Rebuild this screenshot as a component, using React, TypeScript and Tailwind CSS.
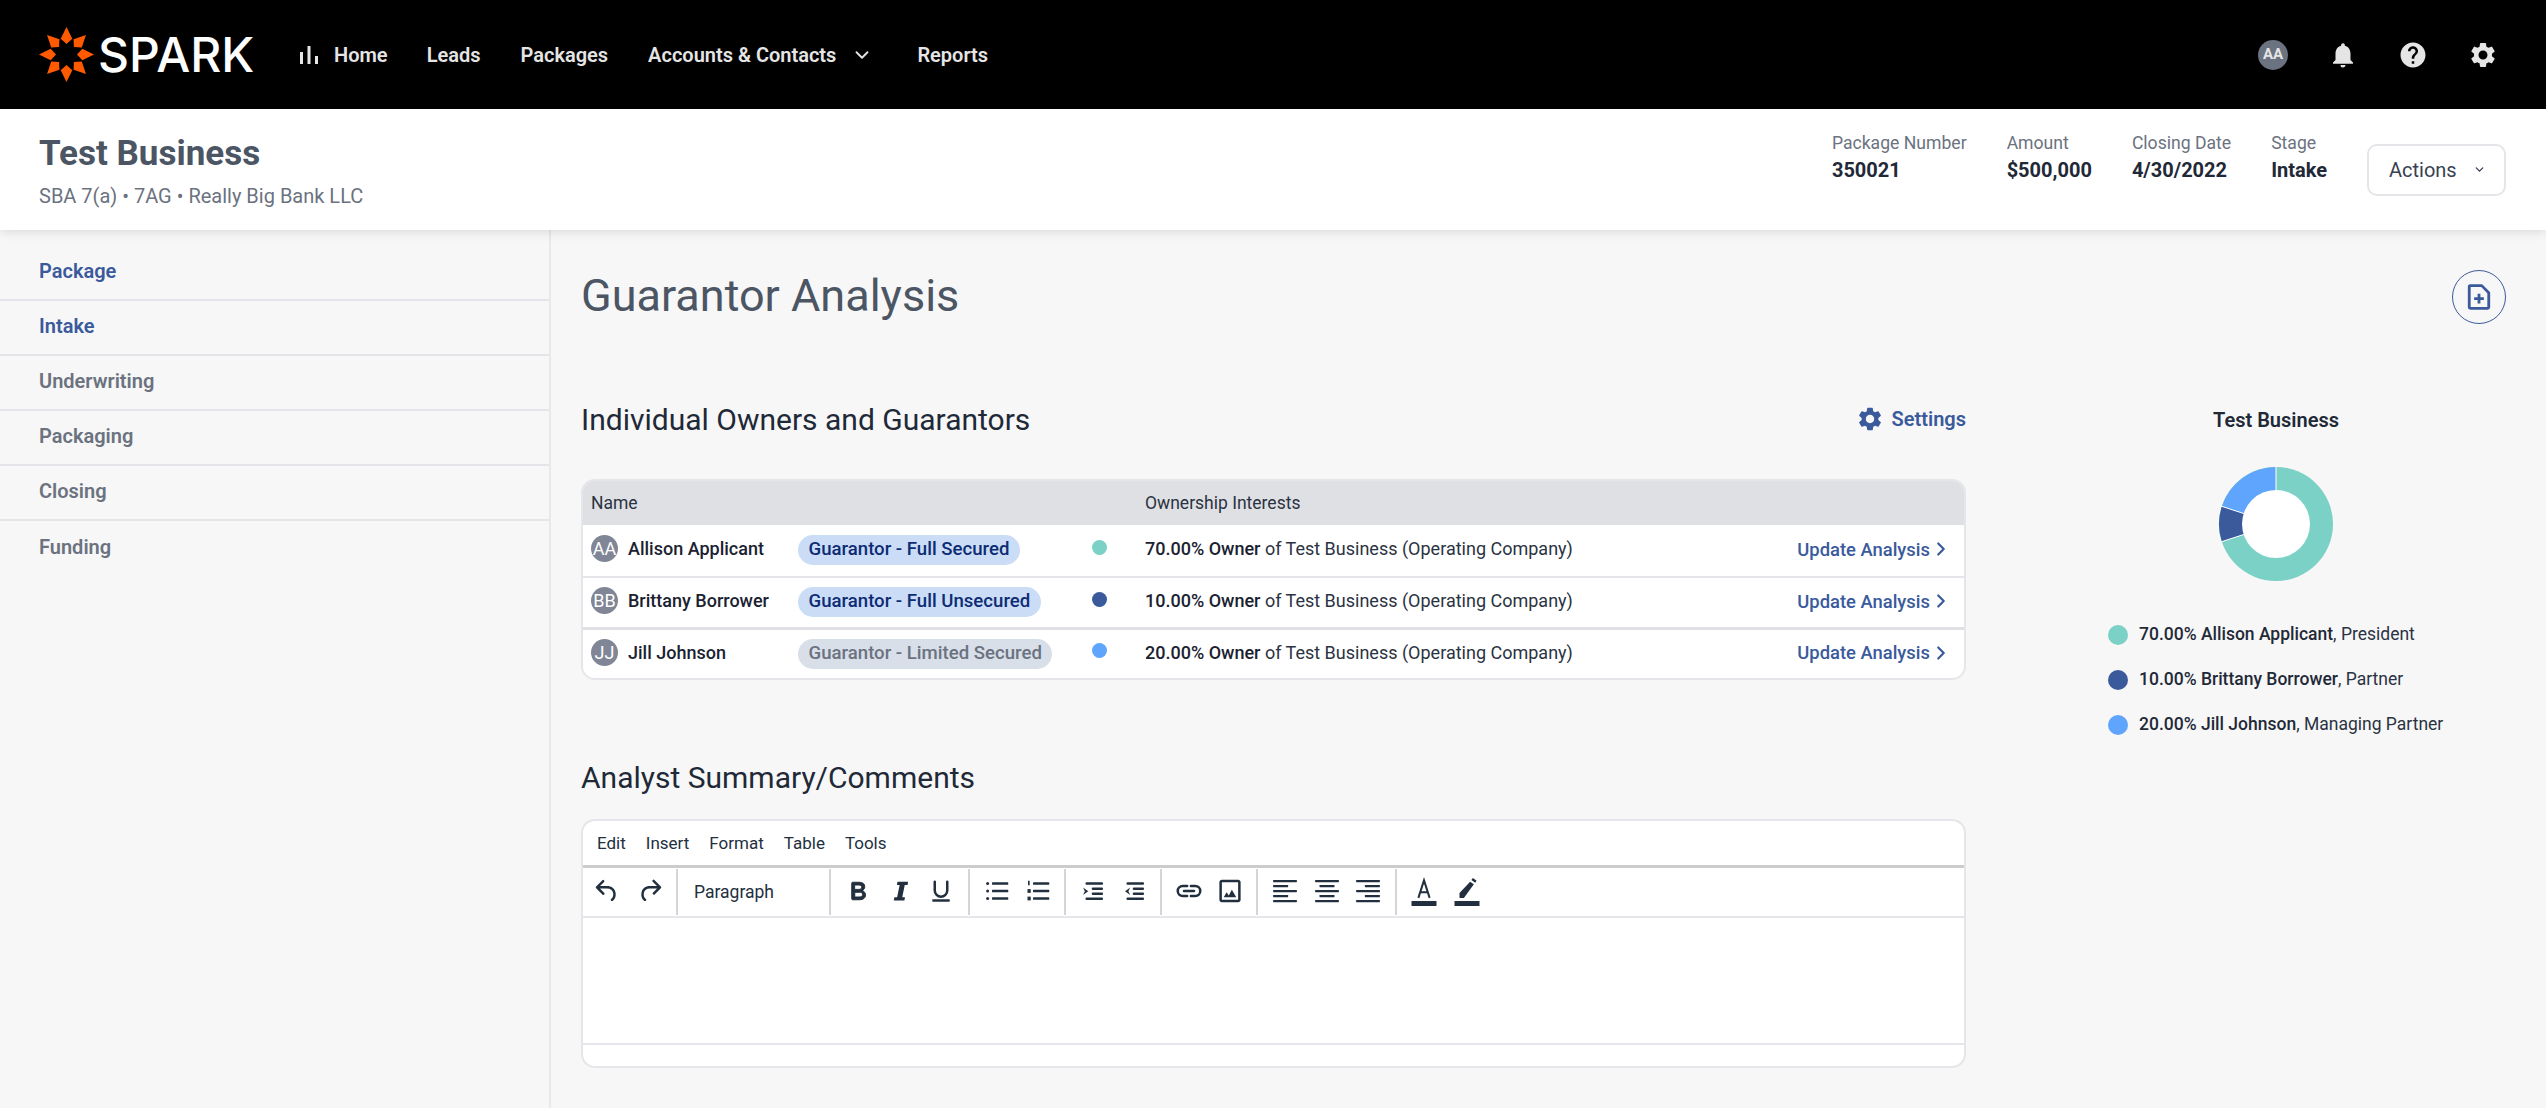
import { ChevronDown, ChevronRight } from 'lucide-react';
import { MdHelp, MdNotifications, MdSettings } from 'react-icons/md';

const owners = [
  { initials: 'AA', name: 'Allison Applicant', badge: 'Guarantor - Full Secured', limited: false, dot: 'bg-[#7bd1c6]', pct: '70.00%', role: 'President', row: 'h-[53px] border-b-2 border-[#e5e6e9]' },
  { initials: 'BB', name: 'Brittany Borrower', badge: 'Guarantor - Full Unsecured', limited: false, dot: 'bg-[#3a5a9c]', pct: '10.00%', role: 'Partner', row: 'h-[52px] border-b-[3px] border-[#dfe0e4]' },
  { initials: 'JJ', name: 'Jill Johnson', badge: 'Guarantor - Limited Secured', limited: true, dot: 'bg-[#60a5fd]', pct: '20.00%', role: 'Managing Partner', row: 'h-[48px]' },
];

const sideItems = [
  { label: 'Package', active: true },
  { label: 'Intake', active: true },
  { label: 'Underwriting', active: false },
  { label: 'Packaging', active: false },
  { label: 'Closing', active: false },
  { label: 'Funding', active: false },
];

const packageFacts = [
  { label: 'Package Number', value: '350021' },
  { label: 'Amount', value: '$500,000' },
  { label: 'Closing Date', value: '4/30/2022' },
  { label: 'Stage', value: 'Intake' },
];

function SparkStar() {
  const angles = [0, 45, 90, 135, 180, 225, 270, 315];
  return (
    <svg width="55" height="55" viewBox="0 0 55 55" className="shrink-0">
      {angles.map((a) => (
        <polygon key={a} points="27.5,0 21.7,11.7 27.5,17 33.3,11.7" fill="#ff5a00" transform={`rotate(${a} 27.5 27.5)`} />
      ))}
    </svg>
  );
}

function BarsIcon() {
  return (
    <svg width="18" height="18" viewBox="0 0 18 18" fill="#e5e5e5">
      <rect x="0" y="6" width="3" height="12" />
      <rect x="7.5" y="0" width="3" height="18" />
      <rect x="15" y="10" width="3" height="8" />
    </svg>
  );
}

function Tool({ children }: { children: React.ReactNode }) {
  return (
    <div className="w-[42.5px] flex items-center justify-center mb-[2px]">
      <svg width="30" height="30" viewBox="0 0 24 24" fill="#222f3e">
        {children}
      </svg>
    </div>
  );
}

function Lines({ rows }: { rows: [number, number][] }) {
  return (
    <>
      {rows.map(([x, w], i) => (
        <rect key={i} x={x} y={3.2 + i * 4} width={w} height="1.7" rx="0.3" />
      ))}
    </>
  );
}

function Donut() {
  return (
    <svg width="116" height="116" viewBox="0 0 116 116">
      <circle cx="58" cy="58" r="57" fill="#7bd1c6" />
      <path d="M58 58 L58 1 A57 57 0 0 0 3.8 40.4 Z" fill="#60a5fd" />
      <path d="M58 58 L3.8 40.4 A57 57 0 0 0 3.8 75.6 Z" fill="#3a5a9c" />
      <g stroke="#ffffff" strokeWidth="1">
        <line x1="58" y1="58" x2="58" y2="0" />
        <line x1="58" y1="58" x2="3" y2="40.1" />
        <line x1="58" y1="58" x2="3" y2="75.9" />
      </g>
      <circle cx="58" cy="58" r="34" fill="#ffffff" />
    </svg>
  );
}

function OwnerRow({ owner }: { owner: (typeof owners)[number] }) {
  return (
    <div className={`flex items-center bg-white ${owner.row}`}>
      <div className="w-[215px] shrink-0 flex items-center pl-[8px] gap-[10px] mb-[4px]">
        <div className="w-[27px] h-[27px] rounded-full bg-[#808695] text-white text-[18px] flex items-center justify-center">{owner.initials}</div>
        <span className="text-[18px] font-medium text-[#1a2231]">{owner.name}</span>
      </div>
      <div className="w-[294px] shrink-0 mb-[1px]">
        <span className={`inline-flex items-center h-[30px] px-[10.5px] rounded-full text-[18.6px] font-medium ${owner.limited ? 'bg-[#d8dfe9] text-[#6b7280]' : 'bg-[#cbdcf7] text-[#0d2c74]'}`}>
          {owner.badge}
        </span>
      </div>
      <div className="w-[53px] shrink-0">
        <div className={`w-[15px] h-[15px] rounded-full mb-[7px] ${owner.dot}`} />
      </div>
      <div className="flex-1 text-[18px] text-[#2a3342] mb-[4px]">
        <span className="font-medium text-[#1a2231]">{owner.pct} Owner</span> of Test Business (Operating Company)
      </div>
      <div className="flex items-center pr-[12px] mb-[2px] text-[18.4px] font-medium text-[#3a5a9c]">
        Update Analysis
        <ChevronRight size={22} strokeWidth={2.4} />
      </div>
    </div>
  );
}

export default function App() {
  return (
    <div className="h-[1108px] flex flex-col bg-[#f7f7f7] overflow-hidden font-[family-name:Roboto,sans-serif]">
      {/* Top nav */}
      <header className="h-[109px] shrink-0 bg-black flex items-center pl-[39px] pr-[48px]">
        <div className="w-[214px] shrink-0 flex items-center">
          <SparkStar />
          <span className="ml-[4px] text-[48px] leading-none font-medium text-white font-[family-name:Inter,sans-serif]">SPARK</span>
        </div>
        <nav className="ml-[47px] flex items-center text-[20px] font-semibold text-[#e5e5e5]">
          <BarsIcon />
          <span className="ml-[16px]">Home</span>
          <span className="ml-[39px]">Leads</span>
          <span className="ml-[40px]">Packages</span>
          <span className="ml-[40px]">Accounts &amp; Contacts</span>
          <ChevronDown size={22} strokeWidth={2} className="ml-[15px]" />
          <span className="ml-[44px]">Reports</span>
        </nav>
        <div className="ml-auto flex items-center gap-[40px] text-[#e5e5e5]">
          <div className="w-[30px] h-[30px] rounded-full bg-[#6b7280] text-[15px] font-bold flex items-center justify-center">AA</div>
          <MdNotifications size={30} />
          <MdHelp size={30} />
          <MdSettings size={30} />
        </div>
      </header>

      {/* Package header */}
      <div className="relative z-10 h-[121px] shrink-0 bg-white shadow-[0_2px_10px_rgba(0,0,0,0.12)] flex items-center justify-between pl-[39px] pr-[40px]">
        <div className="mt-[2px]">
          <div className="text-[35px] leading-[44px] font-bold text-[#4b5563]">Test Business</div>
          <div className="mt-[7px] text-[20px] leading-[26px] text-[#6b7280]">SBA 7(a) • 7AG • Really Big Bank LLC</div>
        </div>
        <div className="flex items-center">
          <div className="flex gap-[40px] mb-[26px]">
            {packageFacts.map((f) => (
              <div key={f.label}>
                <div className="text-[17.6px] leading-[26px] text-[#6b7280]">{f.label}</div>
                <div className="text-[20px] leading-[28px] font-bold text-[#1f2937]">{f.value}</div>
              </div>
            ))}
          </div>
          <button className="ml-[40px] w-[139px] h-[52px] bg-white border-2 border-[#e5e6e9] rounded-[10px] flex items-center pl-[20px] text-[20px] text-[#374151]">
            Actions
            <ChevronDown size={13} strokeWidth={2.5} className="ml-[16px]" />
          </button>
        </div>
      </div>

      <div className="flex-1 flex min-h-0">
        {/* Sidebar */}
        <aside className="w-[551px] shrink-0 border-r-2 border-[#e8e9ec] pt-[16px]">
          {sideItems.map((item, i) => (
            <div
              key={item.label}
              className={`h-[55px] pb-[4px] flex items-center pl-[39px] text-[20px] font-semibold ${i < 5 ? 'border-b-2 border-[#e4e5e9]' : ''} ${item.active ? 'text-[#3a5a9c]' : 'text-[#6b7280]'}`}
            >
              {item.label}
            </div>
          ))}
        </aside>

        {/* Main */}
        <main className="flex-1 min-w-0 pl-[30px] pr-[40px] pt-[40px]">
          <div className="flex items-center justify-between h-[54px]">
            <h1 className="text-[45px] leading-[54px] text-[#4b5563] -mt-[3px]">Guarantor Analysis</h1>
            <div className="w-[54px] h-[54px] rounded-full border-[1.5px] border-[#3a5a9c] flex items-center justify-center">
              <svg width="26" height="26" viewBox="0 0 24 24" fill="none" stroke="#3a5a9c" strokeWidth="2.6" strokeLinejoin="round">
                <path d="M4 1.500h10.500L21 8v13.500a1 1 0 01-1 1H4a1 1 0 01-1-1V2.500a1 1 0 011-1z" />
                <path d="M12 9v9M7.500 13.500h9" />
              </svg>
            </div>
          </div>

          <div className="flex mt-[75px]">
            <div className="w-[1385px] shrink-0">
              <div className="flex items-center justify-between h-[40px]">
                <h2 className="text-[30px] text-[#1f2937]">Individual Owners and Guarantors</h2>
                <div className="flex items-center gap-[8px] text-[20px] font-semibold text-[#3a5a9c]">
                  <MdSettings size={28} />
                  Settings
                </div>
              </div>

              <div className="mt-[40px] rounded-[14px] border-2 border-[#e5e6e9] overflow-hidden">
                <div className="h-[44px] bg-[#dfe0e4] flex items-center text-[17.5px] text-[#2a3342]">
                  <div className="w-[562px] pl-[8px]">Name</div>
                  <div>Ownership Interests</div>
                </div>
                {owners.map((o) => (
                  <OwnerRow key={o.initials} owner={o} />
                ))}
              </div>

              <h2 className="mt-[77px] h-[40px] flex items-center text-[30px] text-[#1f2937]">Analyst Summary/Comments</h2>

              <div className="mt-[22px] h-[249px] rounded-[14px] border-2 border-[#e5e6e9] bg-white flex flex-col overflow-hidden">
                <div className="h-[47px] shrink-0 flex items-center pl-[14px] pt-[2px] gap-[20px] text-[17px] text-[#222f3e] border-b-[3px] border-[#cccccc]">
                  <span>Edit</span>
                  <span>Insert</span>
                  <span>Format</span>
                  <span>Table</span>
                  <span>Tools</span>
                </div>
                <div className="h-[50px] shrink-0 flex items-center border-b-2 border-[#e5e6e9]">
                  <div className="h-[46px] w-[95px] flex pl-[3px] border-r-2 border-[#d4d5d8]">
                    <Tool>
                      <path d="M6.4 8H12c3.7 0 6.2 2 6.8 5.1.6 2.7-.4 5.6-2.3 6.8a1 1 0 01-1-1.8c1.1-.7 1.8-2.7 1.4-4.6-.5-2.1-2.1-3.5-4.9-3.5H6.4l3.3 3.3a1 1 0 11-1.4 1.4l-5-5a1 1 0 010-1.4l5-5a1 1 0 011.4 1.4L6.4 8z" />
                    </Tool>
                    <Tool>
                      <path d="M17.6 10H12c-2.8 0-4.4 1.4-4.9 3.5-.4 2 .3 3.9 1.4 4.6a1 1 0 11-1 1.8c-2-1.2-2.9-4.1-2.3-6.8.6-3 3-5.1 6.8-5.1h5.6l-3.3-3.3a1 1 0 111.4-1.4l5 5a1 1 0 010 1.4l-5 5a1 1 0 01-1.4-1.4l3.3-3.3z" />
                    </Tool>
                  </div>
                  <div className="h-[46px] w-[153px] flex items-center pl-[16px] text-[17.5px] text-[#222f3e] border-r-2 border-[#d4d5d8]">Paragraph</div>
                  <div className="h-[46px] w-[139px] flex px-[6px] border-r-2 border-[#d4d5d8]">
                    <Tool>
                      <path stroke="#222f3e" strokeWidth="0.8" d="M7.8 19c-.3 0-.5 0-.6-.2l-.2-.5V5.700c0-.2 0-.4.2-.5l.6-.2h5c1.500 0 2.700.3 3.500 1 .7.6 1.100 1.400 1.100 2.500a3 3 0 01-.6 1.900c-.4.6-1 1-1.600 1.200.4.1.9.3 1.300.6s.8.7 1 1.200c.4.4.5 1 .5 1.600 0 1.300-.4 2.300-1.300 3-.8.7-2.100 1-3.800 1H7.800zm5-8.300c.6 0 1.200-.1 1.600-.5.4-.3.6-.7.6-1.300 0-1.100-.8-1.700-2.300-1.700H9.300v3.500h3.400zm.5 6c.7 0 1.300-.1 1.700-.4.4-.4.6-.9.6-1.500s-.2-1-.7-1.400c-.4-.3-1-.4-2-.4H9.400v3.800h4z" />
                    </Tool>
                    <Tool>
                      <path d="M18.500 4.500l-.5 2.600h-2.200l-2 9.800h2.200l-.5 2.600H7l.5-2.600h2.200l2-9.800H9.500l.5-2.600h8.500z" />
                    </Tool>
                    <Tool>
                      <path d="M7 4.500v7a5 5 0 0010 0v-7" fill="none" stroke="#222f3e" strokeWidth="2" strokeLinecap="round" />
                      <rect x="5" y="18.500" width="14" height="2" rx="0.5" />
                    </Tool>
                  </div>
                  <div className="h-[46px] w-[96px] flex px-[6px] border-r-2 border-[#d4d5d8]">
                    <Tool>
                      <circle cx="4.500" cy="6" r="1.200" />
                      <circle cx="4.500" cy="12" r="1.200" />
                      <circle cx="4.500" cy="18" r="1.200" />
                      <rect x="8" y="5" width="13" height="2" rx="0.5" />
                      <rect x="8" y="11" width="13" height="2" rx="0.5" />
                      <rect x="8" y="17" width="13" height="2" rx="0.5" />
                    </Tool>
                    <Tool>
                      <rect x="4" y="3.800" width="1.300" height="3.600" />
                      <rect x="3.600" y="10.500" width="2.600" height="3" />
                      <rect x="3.600" y="16.500" width="2.600" height="3" />
                      <rect x="8" y="5" width="13" height="2" rx="0.5" />
                      <rect x="8" y="11" width="13" height="2" rx="0.5" />
                      <rect x="8" y="17" width="13" height="2" rx="0.5" />
                    </Tool>
                  </div>
                  <div className="h-[46px] w-[96px] flex px-[6px] border-r-2 border-[#d4d5d8]">
                    <Tool>
                      <rect x="6" y="5" width="14" height="2" rx="0.8" />
                      <rect x="11" y="9.200" width="9" height="2" rx="0.8" />
                      <rect x="11" y="13.200" width="9" height="2" rx="0.8" />
                      <rect x="6" y="17.200" width="14" height="2" rx="0.8" />
                      <path d="M4 9.200l4.200 3-4.200 3 1.500-3z" />
                    </Tool>
                    <Tool>
                      <rect x="6" y="5" width="14" height="2" rx="0.8" />
                      <rect x="11" y="9.200" width="9" height="2" rx="0.8" />
                      <rect x="11" y="13.200" width="9" height="2" rx="0.8" />
                      <rect x="6" y="17.200" width="14" height="2" rx="0.8" />
                      <path d="M9 9.200l-4.200 3 4.200 3-1.500-3z" />
                    </Tool>
                  </div>
                  <div className="h-[46px] w-[96px] flex px-[6px] border-r-2 border-[#d4d5d8]">
                    <Tool>
                      <path d="M10.500 8H7a4 4 0 000 8h3.500M13.500 8H17a4 4 0 010 8h-3.500M8 12h8" fill="none" stroke="#222f3e" strokeWidth="2" strokeLinecap="round" />
                    </Tool>
                    <Tool>
                      <path d="M5.500 3h13c1.100 0 2 .9 2 2v14c0 1.100-.9 2-2 2h-13c-1.100 0-2-.9-2-2V5c0-1.100.9-2 2-2zm.2 2a.2.2 0 00-.2.2v13.600c0 .1.1.2.2.2h12.600a.2.2 0 00.2-.2V5.200a.2.2 0 00-.2-.2H5.700z" />
                      <path d="M7 17l2.300-4 1.700 2.500 2.500-4.500 3.500 6z" />
                    </Tool>
                  </div>
                  <div className="h-[46px] w-[139px] flex px-[6px] border-r-2 border-[#d4d5d8]">
                    <Tool>
                      <Lines rows={[[2.500, 19], [2.500, 12], [2.500, 19], [2.500, 12], [2.500, 19]]} />
                    </Tool>
                    <Tool>
                      <Lines rows={[[2.500, 19], [6, 12], [2.500, 19], [6, 12], [2.500, 19]]} />
                    </Tool>
                    <Tool>
                      <Lines rows={[[2.500, 19], [9.500, 12], [2.500, 19], [9.500, 12], [2.500, 19]]} />
                    </Tool>
                  </div>
                  <div className="h-[46px] flex px-[6px]">
                    <Tool>
                      <path d="M7.500 17.500L12 3.500l4.500 14M9 13h6" fill="none" stroke="#222f3e" strokeWidth="1.600" />
                      <rect x="2" y="20" width="20" height="4" />
                    </Tool>
                    <Tool>
                      <path d="M6 17.500v-4l8.500-9 3 2-8 11z" />
                      <path d="M15.500 3.200l1.200-1.700 3 2.200-1.200 1.700z" />
                      <rect x="2" y="20" width="20" height="4" />
                    </Tool>
                  </div>
                </div>
                <div className="flex-1" />
                <div className="h-[23px] shrink-0 border-t-2 border-[#e5e6e9]" />
              </div>
            </div>

            {/* Ownership chart */}
            <div className="flex-1 min-w-0 ml-[80px] flex flex-col">
              <div className="h-[40px] pt-[1px] flex items-center justify-center text-[20px] font-semibold text-[#1f2937]">Test Business</div>
              <div className="mt-[27px] flex justify-center">
                <Donut />
              </div>
              <div className="mt-[30px] pl-[62px] text-[17.5px] text-[#2a3342]">
                {owners.map((o) => (
                  <div key={o.initials} className="h-[45px] flex items-center gap-[11px]">
                    <div className={`w-[20px] h-[20px] rounded-full ${o.dot}`} />
                    <div>
                      <span className="font-medium text-[#1f2937]">{o.pct} {o.name}</span>, {o.role}
                    </div>
                  </div>
                ))}
              </div>
            </div>
          </div>
        </main>
      </div>
    </div>
  );
}
